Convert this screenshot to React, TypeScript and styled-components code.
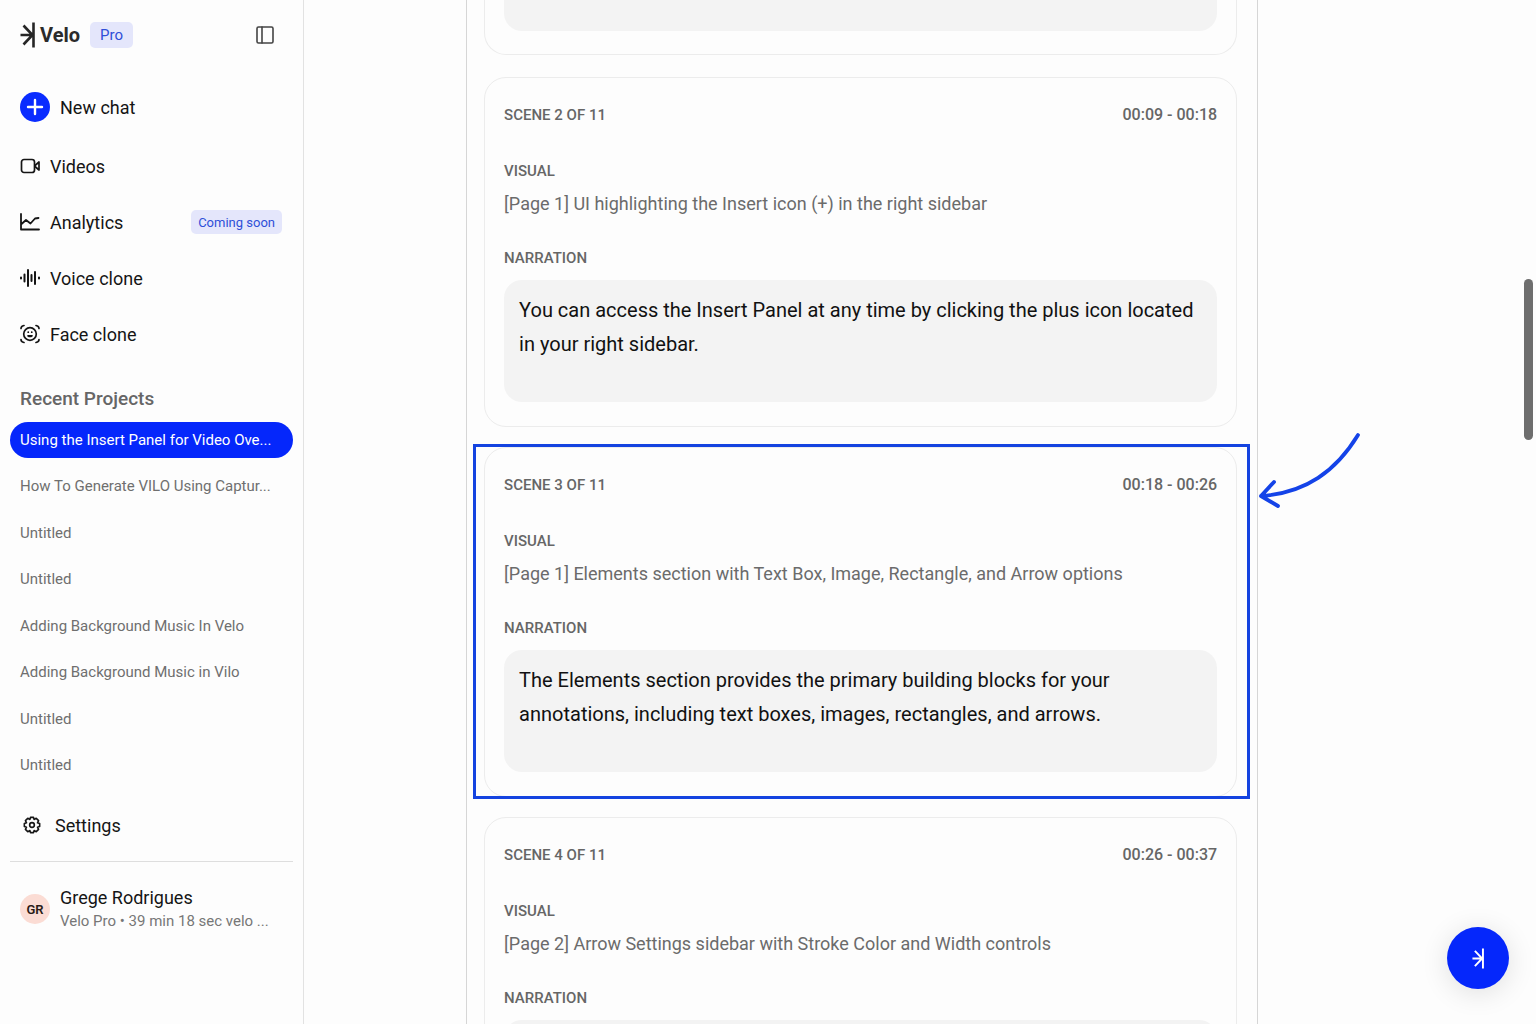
import React from "react";
import styled, { createGlobalStyle } from "styled-components";

const GlobalStyle = createGlobalStyle`
  *, *::before, *::after { box-sizing: border-box; }
  body { margin: 0; background: #fdfdfd; color: #111; font-family: Roboto, "Liberation Sans", sans-serif; }
  button, textarea { font: inherit; color: inherit; }
  h1, h2, h3, p, ul { margin: 0; padding: 0; }
  ul { list-style: none; }
`;

const Shell = styled.div`
  display: grid;
  grid-template-columns: 304px minmax(0, 1fr);
  height: 100vh;
  overflow: hidden;
`;

const Sidebar = styled.aside`
  display: flex;
  flex-direction: column;
  border-right: 1px solid #e2e2e2;
  padding: 0 10px;
  min-height: 0;
`;

const Brand = styled.header`
  display: flex;
  align-items: center;
  height: 70px;
  padding: 0 18px 0 10px;
  color: #262626;
`;

const Wordmark = styled.h1`
  font-size: 20px;
  line-height: 24px;
  font-weight: 700;
  color: #2b2b2b;
  margin-left: 4px;
`;

const Badge = styled.span<{ $small?: boolean }>`
  display: inline-flex;
  align-items: center;
  height: ${(p) => (p.$small ? 24 : 26)}px;
  padding: 0 ${(p) => (p.$small ? 7 : 10)}px;
  margin-left: ${(p) => (p.$small ? "auto" : "10px")};
  border-radius: 5px;
  background: #e4e6fb;
  color: #2f4fd8;
  font-size: ${(p) => (p.$small ? 13 : 15)}px;
`;

const PanelToggle = styled.button`
  display: flex;
  margin-left: auto;
  padding: 0;
  border: 0;
  background: none;
  color: #444;
`;

const Nav = styled.nav`
  display: flex;
  flex-direction: column;
`;

const NavItem = styled.a<{ $primary?: boolean }>`
  display: flex;
  align-items: center;
  gap: 10px;
  height: ${(p) => (p.$primary ? 62 : 56)}px;
  padding: 0 11px 0 10px;
  margin-top: ${(p) => (p.$primary ? 6 : 0)}px;
  color: #151515;
  font-size: 18px;
  text-decoration: none;
`;

const PlusDisc = styled.span`
  display: grid;
  place-items: center;
  width: 30px;
  height: 30px;
  border-radius: 50%;
  background: #0a2cff;
  color: #fff;
`;

const SectionTitle = styled.h2`
  margin: 25px 10px 11px;
  font-size: 19px;
  line-height: 24px;
  font-weight: 500;
  color: #666;
`;

const Projects = styled.ul`
  display: flex;
  flex-direction: column;
  justify-content: space-between;
  height: 361px;
`;

const Project = styled.a<{ $active?: boolean }>`
  display: block;
  height: 36px;
  padding: 0 10px;
  border-radius: 18px;
  white-space: nowrap;
  line-height: 36px;
  font-size: 15px;
  text-decoration: none;
  color: ${(p) => (p.$active ? "#fff" : "#6f6f6f")};
  background: ${(p) => (p.$active ? "#0527fb" : "transparent")};
`;

const SettingsLink = styled(NavItem)`
  gap: 14px;
  height: 72px;
  padding-left: 13px;
  margin-top: 6px;
`;

const Account = styled.footer`
  display: flex;
  align-items: center;
  gap: 10px;
  padding: 24px 10px;
  border-top: 1px solid #dedede;
`;

const Avatar = styled.span`
  display: grid;
  place-items: center;
  flex: none;
  width: 30px;
  height: 30px;
  border-radius: 50%;
  background: #fbdcd4;
  color: #2a1a16;
  font-size: 13px;
  font-weight: 600;
`;

const AccountText = styled.div`
  min-width: 0;
`;

const AccountName = styled.p`
  font-size: 18px;
  line-height: 24px;
  color: #151515;
`;

const AccountPlan = styled.p`
  font-size: 15px;
  line-height: 22px;
  color: #777;
  white-space: nowrap;
`;

const Main = styled.main`
  position: relative;
  display: grid;
  grid-template-columns: minmax(0, 7fr) minmax(0, 792px) minmax(0, 12fr);
  min-height: 0;
  overflow: hidden;
`;

const Script = styled.div`
  grid-column: 2;
  display: flex;
  flex-direction: column;
  gap: 20px;
  padding: 0 20px 0 17px;
  border: solid #d6d6d6;
  border-width: 0 1px;
`;

const Card = styled.section<{ $tail?: boolean }>`
  position: relative;
  flex: none;
  margin-bottom: ${(p) => (p.$tail ? 2 : 0)}px;
  padding: ${(p) => (p.$tail ? "0 19px 23px" : "27px 19px 24px")};
  border: 1px solid #ececec;
  border-top-width: ${(p) => (p.$tail ? 0 : 1)}px;
  border-radius: ${(p) => (p.$tail ? "0 0 22px 22px" : "22px")};
`;

const CardHead = styled.div`
  display: flex;
  justify-content: space-between;
  margin-bottom: 36px;
`;

const Label = styled.h3`
  display: block;
  font-size: 15px;
  line-height: 20px;
  font-weight: 500;
  color: #666;
`;

const Time = styled.time`
  font-size: 16px;
  line-height: 20px;
  font-weight: 500;
  color: #666;
`;

const Visual = styled.p`
  margin: 10px 0 31px;
  font-size: 18px;
  line-height: 26px;
  color: #6b6b6b;
`;

const Narration = styled.textarea<{ $tail?: boolean }>`
  display: block;
  width: 100%;
  height: ${(p) => (p.$tail ? 31 : 122)}px;
  margin-top: ${(p) => (p.$tail ? 0 : 12)}px;
  padding: 13px 15px;
  border: 0;
  border-radius: ${(p) => (p.$tail ? "0 0 18px 18px" : "18px")};
  background: #f3f3f3;
  color: #111;
  font-size: 20px;
  line-height: 34px;
  resize: none;
  outline: none;
  overflow: hidden;
`;

const Highlight = styled.div`
  position: absolute;
  inset: -4px -14px -3px -12px;
  border: 3px solid #1443e0;
  pointer-events: none;
`;

const Arrow = styled.svg`
  position: absolute;
  left: calc(100% + 20px);
  top: -18px;
  pointer-events: none;
`;

const ScrollThumb = styled.div`
  position: absolute;
  top: 279px;
  right: 3px;
  width: 9px;
  height: 161px;
  border-radius: 5px;
  background: #6e6e6e;
`;

const ChatButton = styled.button`
  position: absolute;
  right: 27px;
  bottom: 35px;
  display: grid;
  place-items: center;
  width: 62px;
  height: 62px;
  padding: 0;
  border: 0;
  border-radius: 50%;
  background: #0527fb;
  color: #fff;
  box-shadow: 0 4px 28px rgba(0, 0, 0, 0.12);
`;

const VeloMark = ({ width, height, stroke }: { width: number; height: number; stroke: number }) => (
  <svg width={width} height={height} viewBox="0 0 16 26" fill="none" stroke="currentColor" strokeWidth={stroke} aria-hidden="true">
    <path d="M13.500 .5v25M.5 13H13M3.500 3.500 12.500 13 3.500 22.500" />
  </svg>
);

const Icon = ({ children, size = 20, stroke = 1.8 }: { children: React.ReactNode; size?: number; stroke?: number }) => (
  <svg width={size} height={size} viewBox="0 0 20 20" fill="none" stroke="currentColor" strokeWidth={stroke} strokeLinecap="round" strokeLinejoin="round" aria-hidden="true">
    {children}
  </svg>
);

const projects = [
  "Using the Insert Panel for Video Ove...",
  "How To Generate VILO Using Captur...",
  "Untitled",
  "Untitled",
  "Adding Background Music In Velo",
  "Adding Background Music in Vilo",
  "Untitled",
  "Untitled",
];

const scenes = [
  {
    id: 2,
    time: "00:09 - 00:18",
    visual: "[Page 1] UI highlighting the Insert icon (+) in the right sidebar",
    narration: "You can access the Insert Panel at any time by clicking the plus icon located in your right sidebar.",
  },
  {
    id: 3,
    time: "00:18 - 00:26",
    visual: "[Page 1] Elements section with Text Box, Image, Rectangle, and Arrow options",
    narration: "The Elements section provides the primary building blocks for your annotations, including text boxes, images, rectangles, and arrows.",
    highlighted: true,
  },
  {
    id: 4,
    time: "00:26 - 00:37",
    visual: "[Page 2] Arrow Settings sidebar with Stroke Color and Width controls",
    narration: "",
  },
];

export default function App() {
  return (
    <>
      <GlobalStyle />
      <Shell>
        <Sidebar>
          <Brand>
            <VeloMark width={16} height={26} stroke={2.6} />
            <Wordmark>Velo</Wordmark>
            <Badge>Pro</Badge>
            <PanelToggle aria-label="Toggle sidebar">
              <Icon stroke={1.6}><rect x="2" y="2" width="16" height="16" rx="1.5" /><path d="M7 2v16" /></Icon>
            </PanelToggle>
          </Brand>
          <Nav>
            <NavItem href="#" $primary>
              <PlusDisc><Icon stroke={2.4}><path d="M10 3v14M3 10h14" /></Icon></PlusDisc>
              New chat
            </NavItem>
            <NavItem href="#">
              <Icon stroke={1.7}><rect x="1.5" y="3.5" width="13" height="13" rx="2.5" /><path d="m15 9.500 4-3.500v8l-4-3.500z" /></Icon>
              Videos
            </NavItem>
            <NavItem href="#">
              <Icon><path d="M1 2v15.500h18M1.500 12 6 8l4.500 3.500L15 6.500l3.500-.5" /></Icon>
              Analytics
              <Badge $small>Coming soon</Badge>
            </NavItem>
            <NavItem href="#">
              <Icon stroke={2}><path d="M1 9.500v1M4.500 6.500v7M8 2v16M11.500 7v6M15 4v12M19 9.500v1" /></Icon>
              Voice clone
            </NavItem>
            <NavItem href="#">
              <Icon stroke={1.7}>
                <path d="M1 4.500q0-2.500 3-3M16 1.500q3 .5 3 3M19 15.500q0 2.500-3 3M4 18.500q-3-.5-3-3" />
                <circle cx="10" cy="10" r="6.300" />
                <path d="M8.200 8.200h.1M11.700 8.200h.1M8 11.800q2 1.400 4 0z" />
              </Icon>
              Face clone
            </NavItem>
          </Nav>
          <SectionTitle>Recent Projects</SectionTitle>
          <Projects>
            {projects.map((name, i) => (
              <li key={i}><Project href="#" $active={i === 0}>{name}</Project></li>
            ))}
          </Projects>
          <SettingsLink href="#">
            <Icon size={18} stroke={1.8}>
              <path d="M8.300 1.500h3.400l.6 2.300 2.400-1.200 2.600 2.600-1.200 2.400 2.400.7v3.400l-2.400.7 1.200 2.400-2.600 2.600-2.400-1.200-.6 2.300H8.300l-.6-2.300-2.400 1.200-2.600-2.600 1.200-2.400-2.400-.7V8.300l2.400-.7-1.200-2.400 2.600-2.600 2.400 1.200z" />
              <circle cx="10" cy="10" r="2.600" />
            </Icon>
            Settings
          </SettingsLink>
          <Account>
            <Avatar>GR</Avatar>
            <AccountText>
              <AccountName>Grege Rodrigues</AccountName>
              <AccountPlan>Velo Pro • 39 min 18 sec velo ...</AccountPlan>
            </AccountText>
          </Account>
        </Sidebar>
        <Main>
          <Script>
            <Card $tail><Narration $tail readOnly aria-label="Scene 1 narration" /></Card>
            {scenes.map((s) => (
              <Card key={s.id}>
                <CardHead>
                  <Label>SCENE {s.id} OF 11</Label>
                  <Time>{s.time}</Time>
                </CardHead>
                <Label>VISUAL</Label>
                <Visual>{s.visual}</Visual>
                <Label as="label" htmlFor={`narration-${s.id}`}>NARRATION</Label>
                <Narration id={`narration-${s.id}`} defaultValue={s.narration} />
                {s.highlighted && (
                  <>
                    <Highlight />
                    <Arrow width="106" height="80" viewBox="0 0 106 80" fill="none" stroke="#1443e8" strokeWidth="3.800" strokeLinecap="round" strokeLinejoin="round">
                      <path d="M102 5C80 41 50 63 5 66M18 52 5 66l17 10" />
                    </Arrow>
                  </>
                )}
              </Card>
            ))}
          </Script>
          <ScrollThumb />
          <ChatButton aria-label="Open assistant"><VeloMark width={13} height={21} stroke={2.4} /></ChatButton>
        </Main>
      </Shell>
    </>
  );
}
